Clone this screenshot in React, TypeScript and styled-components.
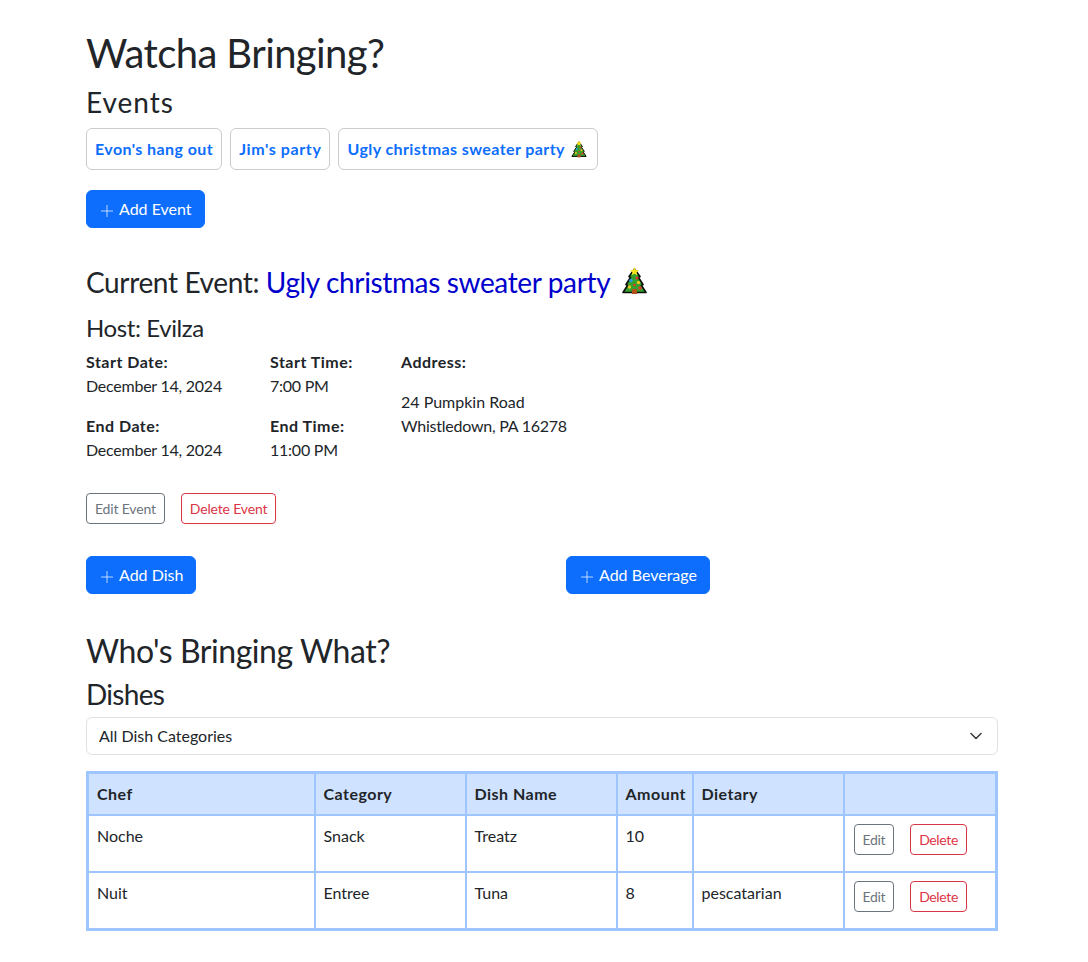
import React from 'react';
import styled, { createGlobalStyle } from 'styled-components';

const GlobalStyle = createGlobalStyle`
  html, body {
    margin: 0;
    padding: 0;
    background: #fff;
    color: #212529;
    font-family: Lato, "Noto Sans", sans-serif;
    font-size: 16px;
    line-height: 24px;
  }
`;

const Page = styled.div`
  width: 912px;
  margin-left: 86px;
  padding: 29px 0 31px;
`;

const Title = styled.h1`
  margin: 0 0 8px;
  font-size: 40px;
  line-height: 48px;
  font-weight: 400;
  letter-spacing: -0.015em;
`;

const SectionTitle = styled.h3<{ $spacing: number }>`
  margin: 0 0 8px;
  font-size: 28px;
  line-height: 34px;
  font-weight: 400;
  letter-spacing: ${({ $spacing }) => $spacing}em;
`;

const EventList = styled.div`
  display: flex;
  gap: 8px;
  margin: 9px 0 20px;
`;

const EventChip = styled.a<{ $spacing?: number }>`
  display: flex;
  align-items: center;
  gap: 4px;
  height: 42px;
  box-sizing: border-box;
  padding: 0 8px;
  border: 1px solid #ccc;
  border-radius: 6px;
  color: #0d6efd;
  font-weight: 700;
  letter-spacing: ${({ $spacing = 0.026 }) => $spacing}em;
`;

const PrimaryButton = styled.button`
  display: inline-flex;
  align-items: center;
  gap: 4px;
  height: 38px;
  padding: 0 12px;
  border: 1px solid #0d6efd;
  border-radius: 6px;
  background: #0d6efd;
  color: #fff;
  font: inherit;
`;

const PlusIcon = styled.svg`
  margin-top: 4px;
`;

const CurrentEvent = styled.h3`
  margin: 37px 0 0;
  font-size: 28px;
  line-height: 34px;
  font-weight: 400;
  letter-spacing: -0.013em;
  display: flex;
  align-items: center;
  gap: 10px;
`;

const EventLink = styled.span`
  color: #0000cd;
`;

const Host = styled.h4`
  margin: 14px 0 8px;
  font-size: 24px;
  line-height: 29px;
  font-weight: 400;
  letter-spacing: -0.017em;
`;

const Details = styled.div`
  display: grid;
  grid-template-columns: 184px 131px 1fr;
  margin-bottom: 15px;
`;

const DetailBlock = styled.div`
  margin-bottom: 16px;
`;

const Label = styled.div`
  font-weight: 700;
  letter-spacing: 0.03em;
`;

const Numeric = styled.span`
  letter-spacing: -0.015em;
`;

const Address = styled.div`
  margin-top: 16px;
`;

const ActionRow = styled.div<{ $gap: number }>`
  display: flex;
  align-items: flex-start;
  gap: ${({ $gap }) => $gap}px;
`;

const SmallButton = styled.button<{ $danger?: boolean }>`
  height: 31px;
  padding: 0 8px;
  border: 1px solid ${({ $danger }) => ($danger ? '#dc3545' : '#6c757d')};
  border-radius: 4px;
  background: #fff;
  color: ${({ $danger }) => ($danger ? '#dc3545' : '#6c757d')};
  font: inherit;
  font-size: 14px;
  letter-spacing: -0.012em;
`;

const RowButton = styled(SmallButton)`
  letter-spacing: -0.025em;
`;

const AddRow = styled.div`
  display: grid;
  grid-template-columns: 480px 1fr;
  justify-items: start;
  margin-top: 32px;
`;

const BigHeading = styled.h2`
  margin: 38px 0 7px;
  font-size: 32px;
  line-height: 38px;
  font-weight: 400;
  letter-spacing: -0.014em;
`;

const DishesTitle = styled(SectionTitle)`
  margin-bottom: 6px;
`;

const SelectBox = styled.div`
  display: flex;
  align-items: center;
  justify-content: space-between;
  box-sizing: border-box;
  height: 38px;
  padding: 0 15px 0 12px;
  margin: 0 0 16px;
  border: 1px solid #dee2e6;
  border-radius: 6px;
`;

const DishTable = styled.table`
  width: 909px;
  table-layout: fixed;
  border-collapse: collapse;
  border: 3px solid #9ec5fe;
`;

const HeadCell = styled.th`
  height: 40px;
  padding: 0 8px;
  border: 2px solid #9ec5fe;
  background: #cfe2ff;
  text-align: left;
  font-weight: 700;
  letter-spacing: 0.03em;
`;

const BodyCell = styled.td`
  height: 57px;
  padding: 8px;
  border: 2px solid #9ec5fe;
  box-sizing: border-box;
  vertical-align: top;
`;

const ButtonCell = styled(BodyCell)`
  padding-left: 9px;
`;

const TreeIcon = styled.svg<{ $lift: number }>`
  flex: none;
  margin: 0 2px ${({ $lift }) => $lift}px;
`;

const Plus = () => (
  <PlusIcon width="16" height="16" viewBox="0 0 16 16" fill="none" stroke="#fff" strokeOpacity="0.7" strokeWidth="1">
    <path d="M8 2v12M2 8h12" />
  </PlusIcon>
);

const Tree = ({ width, height, lift = 0 }: { width: number; height: number; lift?: number }) => (
  <TreeIcon $lift={lift} width={width} height={height} viewBox="0 0 25 29">
    <path
      d="M12.500 3 18 10.500 16.500 11.500 21 18.500 19.500 19.500 24 26.500 1 26.500 5.500 19.500 4 18.500 8.500 11.500 7 10.500Z"
      fill="#35a02c"
      stroke="#0a0f08"
      strokeWidth="1.600"
      strokeLinejoin="round"
    />
    <rect x="10" y="23" width="5" height="5" fill="#b0511c" />
    <path d="M12.500 1 13.800 4 17 4.300 14.600 6.300 15.400 9.300 12.500 7.800 9.600 9.300 10.400 6.300 8 4.300 11.200 4Z" fill="#f8e21c" />
    <circle cx="15" cy="12" r="1.500" fill="#e8352c" />
    <circle cx="9" cy="14.500" r="1.700" fill="#2f9be8" />
    <circle cx="16.500" cy="16.500" r="1.700" fill="#f2c41e" />
    <circle cx="7.500" cy="21" r="1.700" fill="#f2c41e" />
    <circle cx="12.500" cy="19" r="1.300" fill="#e8352c" />
    <circle cx="18" cy="22" r="1.700" fill="#e8352c" />
  </TreeIcon>
);

const Chevron = () => (
  <svg width="12" height="8" viewBox="0 0 12 8" fill="none" stroke="#343a40" strokeWidth="1.5" strokeLinecap="round" strokeLinejoin="round">
    <path d="m1 1.500 5 5 5-5" />
  </svg>
);

const dishes = [
  { chef: 'Noche', category: 'Snack', name: 'Treatz', amount: '10', dietary: '' },
  { chef: 'Nuit', category: 'Entree', name: 'Tuna', amount: '8', dietary: 'pescatarian' },
];

const columns = [227, 151, 151, 76, 151, 153];

const App: React.FC = () => (
  <>
    <GlobalStyle />
    <Page>
      <Title>Watcha Bringing?</Title>
      <SectionTitle $spacing={0.035}>Events</SectionTitle>
      <EventList>
        <EventChip>Evon's hang out</EventChip>
        <EventChip $spacing={0.038}>Jim's party</EventChip>
        <EventChip>Ugly christmas sweater party <Tree width={16} height={18} /></EventChip>
      </EventList>
      <PrimaryButton><Plus /> Add Event</PrimaryButton>

      <CurrentEvent>
        <span>Current Event: <EventLink>Ugly christmas sweater party</EventLink></span>
        <Tree width={25} height={29} lift={3} />
      </CurrentEvent>
      <Host>Host: Evilza</Host>
      <Details>
        <div>
          <DetailBlock><Label>Start Date:</Label><Numeric>December 14, 2024</Numeric></DetailBlock>
          <DetailBlock><Label>End Date:</Label><Numeric>December 14, 2024</Numeric></DetailBlock>
        </div>
        <div>
          <DetailBlock><Label>Start Time:</Label><Numeric>7:00 PM</Numeric></DetailBlock>
          <DetailBlock><Label>End Time:</Label><Numeric>11:00 PM</Numeric></DetailBlock>
        </div>
        <div>
          <Label>Address:</Label>
          <Address>24 Pumpkin Road<br /><Numeric>Whistledown, PA 16278</Numeric></Address>
        </div>
      </Details>
      <ActionRow $gap={16}>
        <SmallButton>Edit Event</SmallButton>
        <SmallButton $danger>Delete Event</SmallButton>
      </ActionRow>
      <AddRow>
        <PrimaryButton><Plus /> Add Dish</PrimaryButton>
        <PrimaryButton><Plus /> Add Beverage</PrimaryButton>
      </AddRow>

      <BigHeading>Who's Bringing What?</BigHeading>
      <DishesTitle $spacing={-0.025}>Dishes</DishesTitle>
      <SelectBox>All Dish Categories<Chevron /></SelectBox>
      <DishTable>
        <colgroup>
          {columns.map((w, i) => <col key={i} style={{ width: w }} />)}
        </colgroup>
        <thead>
          <tr>
            <HeadCell>Chef</HeadCell>
            <HeadCell>Category</HeadCell>
            <HeadCell>Dish Name</HeadCell>
            <HeadCell>Amount</HeadCell>
            <HeadCell>Dietary</HeadCell>
            <HeadCell />
          </tr>
        </thead>
        <tbody>
          {dishes.map(d => (
            <tr key={d.chef}>
              <BodyCell>{d.chef}</BodyCell>
              <BodyCell>{d.category}</BodyCell>
              <BodyCell>{d.name}</BodyCell>
              <BodyCell>{d.amount}</BodyCell>
              <BodyCell>{d.dietary}</BodyCell>
              <ButtonCell>
                <ActionRow $gap={16}>
                  <RowButton>Edit</RowButton>
                  <RowButton $danger>Delete</RowButton>
                </ActionRow>
              </ButtonCell>
            </tr>
          ))}
        </tbody>
      </DishTable>
    </Page>
  </>
);

export default App;
